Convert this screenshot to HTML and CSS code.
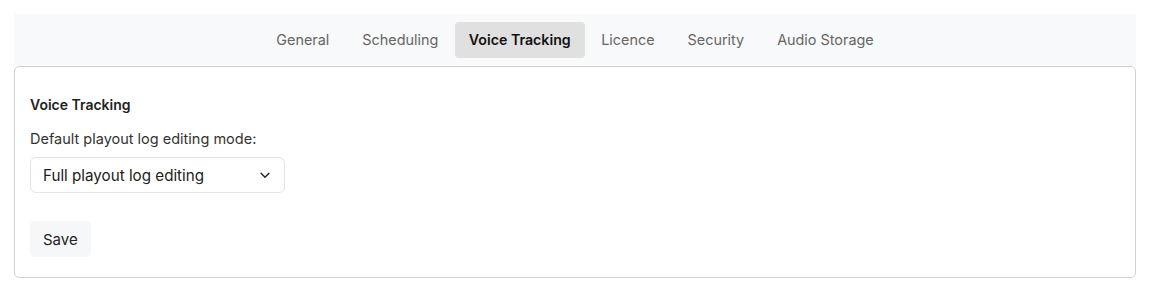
FILE: index.html
```html
<!DOCTYPE html>
<html lang="en">
<head>
  <meta charset="UTF-8">
  <meta name="viewport" content="width=device-width, initial-scale=1.0">
  <title>Settings - Voice Tracking</title>
  <link rel="stylesheet" href="styles.css">
</head>
<body>
  <div class="settings">
    <nav class="tabs">
      <a href="#" class="tab">General</a>
      <a href="#" class="tab">Scheduling</a>
      <a href="#" class="tab active">Voice Tracking</a>
      <a href="#" class="tab">Licence</a>
      <a href="#" class="tab">Security</a>
      <a href="#" class="tab">Audio Storage</a>
    </nav>

    <form class="card">
      <h3>Voice Tracking</h3>
      <label for="modo">Default playout log editing mode:</label>
      <div class="select-wrap">
        <select id="modo" name="modo">
          <option value="full">Full playout log editing</option>
          <option value="tracks">Voice tracks only</option>
        </select>
        <svg class="chevron" width="14" height="14" viewBox="0 0 16 16" fill="none" stroke="#222" stroke-width="1.6" stroke-linecap="round" stroke-linejoin="round">
          <path d="M3.5 6l4.5 4.5L12.5 6"/>
        </svg>
      </div>
      <button type="submit">Save</button>
    </form>
  </div>
</body>
</html>
```

FILE: styles.css
```css
/* Estilos generales */
body {
  font-family: Inter, "Noto Sans", sans-serif;
  margin: 0;
  padding: 14px;
  background: #fff;
  color: #222;
}
.settings {
  display: flex;
  flex-direction: column;
}
.tabs {
  display: flex;
  justify-content: center;
  background: #f8f9fa;
  padding: 8px 0;
}
.tab {
  display: block;
  padding: 0 16.5px;
  height: 36px;
  line-height: 36px;
  font-size: 14.4px;
  color: #666;
  text-decoration: none;
  border-radius: 4px;
}
.tab.active {
  background: #e0e0e0;
  color: #111;
  font-weight: 600;
  padding: 0 14px;
  font-size: 14.2px;
}
/* Tarjeta de contenido */
.card {
  border: 1px solid #d2d2d2;
  border-radius: 5px;
  padding: 28px 15px 20px;
  display: flex;
  flex-direction: column;
  align-items: flex-start;
}
.card h3 {
  margin: 0;
  font-size: 14px;
  line-height: 20px;
  font-weight: 600;
  color: #222;
}
.card label {
  margin-top: 14px;
  font-size: 14.5px;
  line-height: 20px;
  color: #333;
}
.select-wrap {
  position: relative;
  margin-top: 8px;
}
select {
  appearance: none;
  width: 255px;
  height: 36px;
  padding: 0 12px;
  font-family: inherit;
  font-size: 15.2px;
  color: #222;
  background: #fff;
  border: 1px solid #e3e5e8;
  border-radius: 6px;
}
.chevron {
  position: absolute;
  right: 13px;
  top: 11px;
  pointer-events: none;
}
button {
  margin-top: 28px;
  height: 36px;
  padding: 0 13px;
  font-family: inherit;
  font-size: 15px;
  color: #222;
  background: #f6f7f9;
  border: none;
  border-radius: 5px;
  cursor: pointer;
}
```
